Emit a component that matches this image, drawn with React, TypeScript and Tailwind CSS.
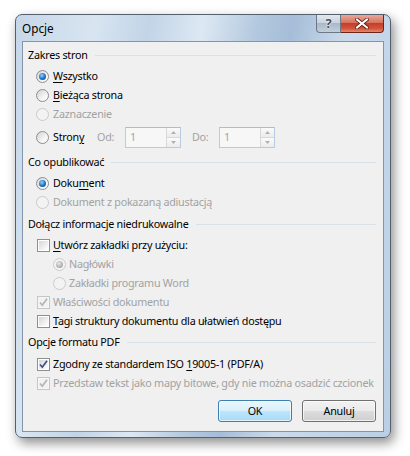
import React from "react";

function Radio({ checked = false, disabled = false }: { checked?: boolean; disabled?: boolean }) {
  return (
    <span
      className={`flex h-[13px] w-[13px] shrink-0 items-center justify-center rounded-full border ${
        disabled
          ? "border-[#cbcbcb] bg-[#f3f3f3]"
          : "border-[#8d8d8d] bg-[linear-gradient(135deg,#d2d2d2,#f4f4f4_60%,#ffffff)]"
      }`}
    >
      {checked && (
        <span
          className={`h-[7px] w-[7px] rounded-full ${
            disabled
              ? "bg-[radial-gradient(circle_at_40%_35%,#e8e8e8,#a9a9a9_70%)]"
              : "bg-[radial-gradient(circle_at_40%_35%,#8fd3ff,#1f6fc0_55%,#0c3d78)]"
          }`}
        />
      )}
    </span>
  );
}

function Check({ checked = false, disabled = false }: { checked?: boolean; disabled?: boolean }) {
  return (
    <span
      className={`relative flex h-[13px] w-[13px] shrink-0 items-center justify-center border ${
        disabled ? "border-[#c6c6c6] bg-[#f6f6f6]" : "border-[#8e8f8f] bg-white"
      }`}
    >
      <span
        className={`absolute inset-[1px] ${
          disabled ? "bg-[#f2f2f2]" : "bg-[linear-gradient(135deg,#d6d6d6,#f4f4f4_70%,#ffffff)]"
        }`}
      />
      {checked && (
        <svg viewBox="0 0 11 11" className="relative h-[11px] w-[11px]">
          <path
            d="M2 5.5 L4.3 8.2 L9 1.8"
            fill="none"
            stroke={disabled ? "#b4b4b4" : "#3c4f8c"}
            strokeWidth="1.7"
          />
        </svg>
      )}
    </span>
  );
}

function Header({ children }: { children: React.ReactNode }) {
  return (
    <div className="flex h-[16px] items-center pl-[5px] pr-[7px]">
      <span className="whitespace-nowrap">{children}</span>
      <span className="ml-[7px] h-px flex-1 bg-[#d8e0e8]" />
    </div>
  );
}

function U({ children }: { children: React.ReactNode }) {
  return <span className="underline underline-offset-[2px]">{children}</span>;
}

function Spin() {
  return (
    <div className="flex h-[21px] w-[56px] border border-[#b9cbe0] border-t-[#a9bdd6] bg-[#f7f7f7]">
      <div className="flex flex-1 items-center pl-[4px] text-[#a3a3a3]">1</div>
      <div className="flex w-[14px] flex-col border-l border-[#d8d8d8]">
        <div className="flex flex-1 items-center justify-center border-b border-[#d8d8d8] bg-[linear-gradient(#fafafa,#ececec)]">
          <svg viewBox="0 0 5 3" className="h-[3px] w-[5px]">
            <path d="M0 3 L2.5 0 L5 3Z" fill="#b0b0b0" />
          </svg>
        </div>
        <div className="flex flex-1 items-center justify-center bg-[linear-gradient(#fafafa,#ececec)]">
          <svg viewBox="0 0 5 3" className="h-[3px] w-[5px]">
            <path d="M0 0 L2.5 3 L5 0Z" fill="#b0b0b0" />
          </svg>
        </div>
      </div>
    </div>
  );
}

export default function App() {
  const dis = "text-[#a2a2a2]";
  return (
    <div className="h-[456px] w-[410px] overflow-hidden bg-white pl-[15px] pt-[14px] font-['Noto_Sans',sans-serif] text-[10.75px] leading-none tracking-[-0.25px] text-black">
      <div className="flex h-[424px] w-[376px] flex-col rounded-[7px] border border-[#54606e] bg-[linear-gradient(100deg,#c6d7e9_0%,#d8e5f1_18%,#c2d4e7_30%,#dde8f3_42%,#b4c9df_54%,#a5bdd8_62%,#cbdaeb_74%,#c1d4e8_88%,#bbcfe4_100%)] shadow-[3px_5px_12px_rgba(0,0,0,0.45)]">
        {/* title bar */}
        <div className="flex h-[26px] shrink-0 items-start">
          <div className="pl-[6px] pt-[8px] text-[11.75px] tracking-normal text-black">Opcje</div>
          <div className="ml-auto mr-[6px] flex h-[18px]">
            <div className="flex w-[25px] items-center justify-center rounded-bl-[4px] border border-t-0 border-[#6b7887] bg-[linear-gradient(#e1e8ef,#c9d3de_45%,#aab8c7_50%,#c3cfdb)]">
              <span className="text-[13px] font-bold text-[#45505c] [text-shadow:0_0_1px_#fff,0_0_2px_#fff]">?</span>
            </div>
            <div className="flex w-[43px] items-center justify-center rounded-br-[4px] border border-l-0 border-t-0 border-[#6d2419] bg-[linear-gradient(#e9a99a,#d8735f_45%,#c63d28_50%,#d2553e_80%,#e48b6d)]">
              <svg viewBox="0 0 14 11" className="h-[11px] w-[14px]">
                <path d="M2 1.5 L12 9.5 M12 1.5 L2 9.5" stroke="#5a1a10" strokeWidth="3.6" strokeLinecap="square" />
                <path d="M2 1.5 L12 9.5 M12 1.5 L2 9.5" stroke="#ffffff" strokeWidth="2" strokeLinecap="square" />
              </svg>
            </div>
          </div>
        </div>
        {/* client */}
        <div className="mx-[6px] mb-[5px] flex flex-1 flex-col border border-[#8495aa] bg-[#f0f0f0]">
          <div className="mt-[5px]">
            <Header>Zakres stron</Header>
          </div>
          <div className="mt-[4px] flex flex-col pl-[13px]">
            <div className="flex h-[19px] items-center gap-[4px]">
              <Radio checked />
              <span>
                <U>W</U>szystko
              </span>
            </div>
            <div className="flex h-[19px] items-center gap-[4px]">
              <Radio />
              <span>
                <U>B</U>ieżąca strona
              </span>
            </div>
            <div className="flex h-[19px] items-center gap-[4px]">
              <Radio disabled />
              <span className={dis}>Zaznaczenie</span>
            </div>
            <div className="mt-[2px] flex h-[22px] items-center">
              <Radio />
              <span className="ml-[4px] w-[44px]">
                Stron<U>y</U>
              </span>
              <span className={`w-[28px] ${dis}`}>Od:</span>
              <Spin />
              <span className={`ml-[11px] w-[27px] ${dis}`}>Do:</span>
              <Spin />
            </div>
          </div>
          <div className="mt-[6px]">
            <Header>Co opublikować</Header>
          </div>
          <div className="mt-[4px] flex flex-col pl-[13px]">
            <div className="flex h-[19px] items-center gap-[4px]">
              <Radio checked />
              <span>
                Doku<U>m</U>ent
              </span>
            </div>
            <div className="flex h-[19px] items-center gap-[4px]">
              <Radio disabled />
              <span className={dis}>Dokument z pokazaną adiustacją</span>
            </div>
          </div>
          <div className="mt-[4px]">
            <Header>Dołącz informacje niedrukowalne</Header>
          </div>
          <div className="mt-[4px] flex flex-col pl-[14px]">
            <div className="flex h-[19px] items-center gap-[3px]">
              <Check />
              <span>
                <U>U</U>twórz zakładki przy użyciu:
              </span>
            </div>
            <div className="flex h-[19px] items-center gap-[3px] pl-[16px]">
              <Radio checked disabled />
              <span className={dis}>Nagłówki</span>
            </div>
            <div className="flex h-[19px] items-center gap-[3px] pl-[16px]">
              <Radio disabled />
              <span className={dis}>Zakładki programu Word</span>
            </div>
            <div className="flex h-[19px] items-center gap-[3px]">
              <Check checked disabled />
              <span className={dis}>Właściwości dokumentu</span>
            </div>
            <div className="flex h-[19px] items-center gap-[3px]">
              <Check />
              <span>
                <U>T</U>agi struktury dokumentu dla ułatwień dostępu
              </span>
            </div>
          </div>
          <div className="mt-[3px]">
            <Header>Opcje formatu PDF</Header>
          </div>
          <div className="mt-[5px] flex flex-col pl-[14px]">
            <div className="flex h-[19px] items-center gap-[3px]">
              <Check checked />
              <span>
                Zgodny ze standardem ISO <U>1</U>9005-1 (PDF/A)
              </span>
            </div>
            <div className="flex h-[19px] items-center gap-[3px]">
              <Check checked disabled />
              <span className={`whitespace-nowrap ${dis}`}>
                Przedstaw tekst jako mapy bitowe, gdy nie można osadzić czcionek
              </span>
            </div>
          </div>
          <div className="mt-[7px] flex justify-end gap-[10px] pr-[7px]">
            <button className="flex h-[22px] w-[74px] items-center justify-center rounded-[3px] border border-[#3c7fb1] bg-[linear-gradient(#eaf6fd_0%,#d9f0fc_48%,#bee6fd_50%,#a7d9f5_100%)] shadow-[inset_0_0_0_1px_rgba(255,255,255,0.7)]">
              OK
            </button>
            <button className="flex h-[22px] w-[74px] items-center justify-center rounded-[3px] border border-[#707070] bg-[linear-gradient(#f2f2f2_0%,#ebebeb_48%,#dddddd_50%,#cfcfcf_100%)] shadow-[inset_0_0_0_1px_rgba(255,255,255,0.7)]">
              Anuluj
            </button>
          </div>
        </div>
      </div>
    </div>
  );
}
